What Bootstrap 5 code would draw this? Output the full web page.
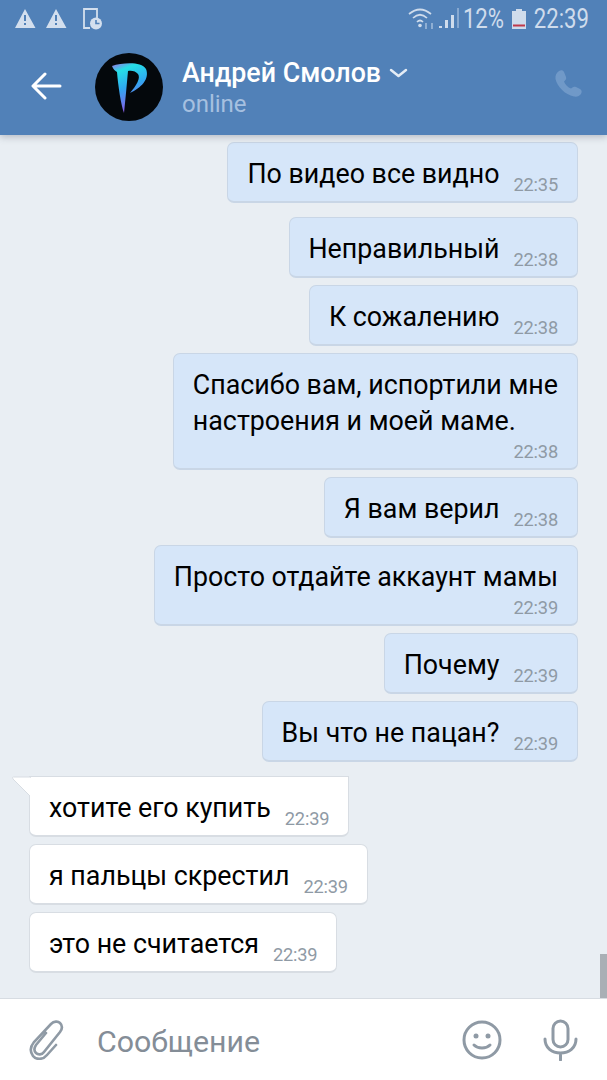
<!DOCTYPE html>
<html lang="ru">

<head>
    <meta charset="UTF-8">
    <meta name="viewport" content="width=device-width, initial-scale=1.0">
    <title>Андрей Смолов</title>
    <link href="https://cdn.jsdelivr.net/npm/bootstrap@5.3.3/dist/css/bootstrap.min.css" rel="stylesheet">
    <style>
        body {
            font-family: Roboto, "Liberation Sans", sans-serif;
            background: #e9eef3;
        }

        .app-screen {
            width: 607px;
            height: 1080px;
            overflow: hidden;
        }

        .top-head {
            height: 135px;
            background: #5181b8;
            z-index: 2;
            box-shadow: 0 2px 7px rgba(60, 70, 85, 0.3);
        }

        .status-row {
            height: 37px;
            padding: 0 18px 0 15px;
            color: #cfdcec;
        }

        .status-text {
            font-size: 27px;
            line-height: 32px;
            white-space: nowrap;
            transform: scaleX(0.82);
            transform-origin: right center;
        }

        .status-pct {
            width: 40px;
        }

        .status-clock {
            width: 55px;
        }

        .head-row {
            height: 98px;
            padding-left: 31px;
            padding-right: 24px;
        }

        .avatar-pic {
            width: 68px;
            height: 68px;
            margin-left: 33px;
            margin-right: 19px;
            margin-top: 2px;
        }

        .peer-name {
            font-size: 26.8px;
            font-weight: 500;
            line-height: 32px;
            color: #fff;
        }

        .peer-state {
            font-size: 24px;
            line-height: 30px;
            color: #a6c0e0;
        }

        .chat-area {
            background: #e9eef3;
            padding: 7px 29px 0;
            gap: 7px;
        }

        .msg {
            font-size: 26.8px;
            line-height: 35px;
            color: #000;
            padding: 14px 19px 9px;
            border: 1px solid #c9d6e6;
            border-bottom-width: 2px;
            border-radius: 7px;
            background: #d6e6f9;
            white-space: nowrap;
        }

        .msg-in {
            background: #fff;
            border-color: #d8dde3;
        }

        .msg-gap {
            margin-bottom: 7px;
        }

        .msg-time {
            font-size: 18.3px;
            line-height: 20px;
            color: #8f9aa5;
            margin-left: 14px;
            margin-bottom: -3px;
            letter-spacing: -0.2px;
        }

        .msg-tail {
            left: -18px;
            top: -1px;
        }

        .time-under {
            margin-top: 3px;
        }

        .two-lines {
            line-height: 35.5px;
        }

        .scroll-thumb {
            right: 0;
            bottom: 82px;
            width: 7px;
            height: 44px;
            background: #a9afb5;
        }

        .bottom-bar {
            height: 82px;
            background: #fff;
            border-top: 1px solid #d7dce2;
            padding-left: 29px;
            padding-right: 29px;
        }

        .msg-field {
            font-size: 30.3px;
            color: #848d97;
            margin-left: 32px;
            padding-top: 5px;
        }

        .smile-icon {
            margin-right: 41px;
        }
    </style>
</head>

<body>
    <div class="app-screen d-flex flex-column position-relative">

        <!-- header -->
        <div class="top-head position-relative flex-shrink-0">
            <div class="status-row d-flex align-items-center">
                <svg width="52" height="20" viewBox="0 0 52 20" class="me-3">
                    <path d="M10 0 L20.500 19 H0 Z M41 0 L51.500 19 H31 Z" fill="#d3dfee" />
                    <path d="M9 6h2v6H9zM9 14h2v2H9zM40 6h2v6h-2zM40 14h2v2h-2z" fill="#5181b8" />
                </svg>
                <svg width="20" height="22" viewBox="0 0 20 22">
                    <path d="M7 20H1V1h13v9" fill="none" stroke="#d3dfee" stroke-width="1.800" />
                    <circle cx="13" cy="15.500" r="6" fill="#d3dfee" />
                    <path d="M13 12v3.500h3.500" fill="none" stroke="#5181b8" stroke-width="1.600" />
                </svg>
                <div class="ms-auto d-flex align-items-center">
                    <svg width="52" height="22" viewBox="0 0 52 22">
                        <path d="M1 6 Q12 -3 23 6 M5 10 Q12 3.500 19 10 M9 14 Q12 11 15 14" fill="none" stroke="#cfdcec" stroke-width="1.700" />
                        <circle cx="12" cy="17.500" r="1.800" fill="#cfdcec" />
                        <path d="M18 21v-6M24 15v6" stroke="#a9c2df" stroke-width="1.400" />
                        <path d="M31 20h3v-2h-3zM37 20h3v-8h-3zM43 20h3V7h-3z" fill="#cfdcec" />
                        <path d="M49 20h2V0h-2z" fill="#86a8d0" />
                    </svg>
                    <div class="status-text status-pct ms-1 d-flex justify-content-end"><span class="flex-shrink-0">12%</span></div>
                    <svg width="14" height="20" viewBox="0 0 14 20" class="mx-2">
                        <path d="M4 0h6v2h4v18H0V2h4z" fill="#cfdcec" />
                        <rect x="1" y="15.500" width="12" height="2" fill="#c0394b" />
                    </svg>
                    <div class="status-text status-clock d-flex justify-content-end"><span class="flex-shrink-0">22:39</span></div>
                </div>
            </div>
            <div class="head-row d-flex align-items-center">
                <svg width="31" height="28" viewBox="0 0 31 28">
                    <path d="M29 14H3M14 2 2 14l12 12" fill="none" stroke="#fff" stroke-width="3" stroke-linecap="round" stroke-linejoin="round" />
                </svg>
                <svg class="avatar-pic flex-shrink-0" viewBox="0 0 68 68">
                    <defs>
                        <linearGradient id="pGrad" x1="0" y1="0" x2="0.3" y2="1">
                            <stop offset="0" stop-color="#a06be8" />
                            <stop offset="0.2" stop-color="#25dfe6" />
                            <stop offset="0.55" stop-color="#30a8f0" />
                            <stop offset="1" stop-color="#8a5be8" />
                        </linearGradient>
                    </defs>
                    <circle cx="34" cy="34" r="34" fill="#04080c" />
                    <path d="M17 13 C27 10 46 8 51 16 C55 26 46 35 35 40 C41 33 46 25 43 21 C41 18 36 17 33 18 L31 40 L29 60 C26 52 23 32 22 19 C20 18 18 16 17 13 Z" fill="url(#pGrad)" />
                </svg>
                <div class="flex-grow-1 mt-1">
                    <div class="peer-name d-flex align-items-center">
                        Андрей Смолов
                        <svg width="19" height="10" viewBox="0 0 19 10" class="ms-2">
                            <path d="M2 2l7.500 6L17 2" fill="none" stroke="#e4ecf5" stroke-width="2.500" stroke-linecap="round" stroke-linejoin="round" />
                        </svg>
                    </div>
                    <div class="peer-state">online</div>
                </div>
                <svg width="30" height="30" viewBox="0 0 30 30" class="mb-1">
                    <path d="M6 2c2-1 4-1 5 1l2 5c.500 1.500 0 2.500-1 3.500l-1 1c1 3 4 6 7 7l1.500-1c1-1 2-1 3.500-.500l4 2c2 1 2 3 1 5-1.500 2-4 3-7 2.500C12 26 4 17 2.500 10 2 6.500 3.500 3.500 6 2z" fill="#7099c8" />
                </svg>
            </div>
        </div>

        <!-- messages -->
        <div class="chat-area flex-grow-1 d-flex flex-column align-items-end">
            <div class="msg msg-gap d-flex align-items-end"><span>По видео все видно</span><span class="msg-time">22:35</span></div>
            <div class="msg d-flex align-items-end"><span>Неправильный</span><span class="msg-time">22:38</span></div>
            <div class="msg d-flex align-items-end"><span>К сожалению</span><span class="msg-time">22:38</span></div>
            <div class="msg d-flex flex-column"><span class="two-lines">Спасибо вам, испортили мне<br>настроения и моей маме.</span><span class="msg-time time-under text-end">22:38</span></div>
            <div class="msg d-flex align-items-end"><span>Я вам верил</span><span class="msg-time">22:38</span></div>
            <div class="msg d-flex flex-column"><span>Просто отдайте аккаунт мамы</span><span class="msg-time time-under text-end">22:39</span></div>
            <div class="msg d-flex align-items-end"><span>Почему</span><span class="msg-time">22:39</span></div>
            <div class="msg msg-gap d-flex align-items-end"><span>Вы что не пацан?</span><span class="msg-time">22:39</span></div>
            <div class="msg msg-in d-flex align-items-end align-self-start position-relative rounded-top-0"><svg class="msg-tail position-absolute" width="19" height="21" viewBox="0 0 19 21"><path d="M19 1H1.500Q-.500 1 1 3L18 20h1z" fill="#fff" stroke="#d8dde3" /><path d="M18 2h2v19h-2z" fill="#fff" /></svg><span>хотите его купить</span><span class="msg-time">22:39</span></div>
            <div class="msg msg-in d-flex align-items-end align-self-start"><span>я пальцы скрестил</span><span class="msg-time">22:39</span></div>
            <div class="msg msg-in d-flex align-items-end align-self-start"><span>это не считается</span><span class="msg-time">22:39</span></div>
        </div>
        <div class="scroll-thumb position-absolute"></div>

        <!-- input -->
        <div class="bottom-bar flex-shrink-0 d-flex align-items-center">
            <svg width="36" height="40" viewBox="0 0 36 40">
                <path d="M17 13 7 25c-2 3-2 6 0 8s6 2 8-1L31 12c3-4 2-7 0-9s-6-2-9 1L5 22c-4 5-4 10-1 14s10 4 14-1l9-10" fill="none" stroke="#8f9aa5" stroke-width="2.600" stroke-linecap="round" />
            </svg>
            <div class="msg-field flex-grow-1">Сообщение</div>
            <svg width="40" height="40" viewBox="0 0 40 40" class="smile-icon">
                <circle cx="20" cy="20" r="18" fill="none" stroke="#8f9aa5" stroke-width="3" />
                <circle cx="14" cy="16" r="2.500" fill="#8f9aa5" />
                <circle cx="26" cy="16" r="2.500" fill="#8f9aa5" />
                <path d="M12 25c4 4 12 4 16 0" fill="none" stroke="#8f9aa5" stroke-width="3" stroke-linecap="round" />
            </svg>
            <svg width="35" height="42" viewBox="0 0 35 42">
                <rect x="10" y="2" width="15" height="26" rx="7.500" fill="none" stroke="#8f9aa5" stroke-width="3" />
                <path d="M2 20c0 9 7 14 15.500 14S33 29 33 20M17.500 34v7" fill="none" stroke="#8f9aa5" stroke-width="3" stroke-linecap="round" />
            </svg>
        </div>
    </div>
    <script src="https://cdn.jsdelivr.net/npm/bootstrap@5.3.3/dist/js/bootstrap.bundle.min.js"></script>
</body>

</html>
